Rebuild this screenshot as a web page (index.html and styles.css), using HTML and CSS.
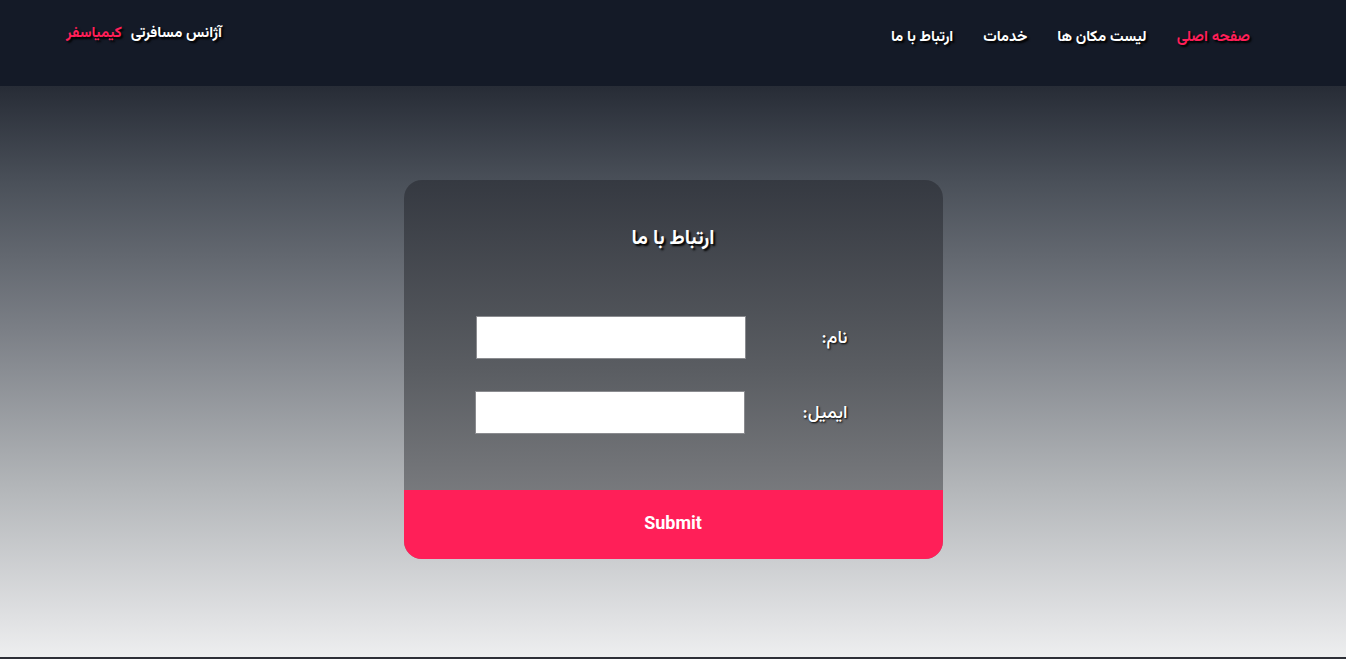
FILE: index.html
```html
<!DOCTYPE html>
<html lang="fa" dir="rtl">
<head>
<meta charset="utf-8">
<title>ارتباط با ما</title>
<link rel="stylesheet" href="styles.css">
</head>
<body>
<header class="topbar">
  <nav class="nav">
    <a class="nav-link active" href="#">صفحه اصلی</a>
    <a class="nav-link" href="#">لیست مکان ها</a>
    <a class="nav-link" href="#">خدمات</a>
    <a class="nav-link" href="#">ارتباط با ما</a>
  </nav>
  <div class="brand"><span class="brand-white">آژانس مسافرتی</span><span class="brand-pink">کیمیاسفر</span></div>
</header>
<main class="main">
  <form class="card">
    <div class="card-body">
      <h1 class="card-title">ارتباط با ما</h1>
      <div class="fields">
        <div class="row row-name">
          <label class="label">نام:</label>
          <input class="input" type="text">
        </div>
        <div class="row row-email">
          <label class="label">ایمیل:</label>
          <input class="input" type="text">
        </div>
      </div>
    </div>
    <button class="submit" type="button">Submit</button>
  </form>
</main>
</body>
</html>
```

FILE: styles.css
```css
* { box-sizing: border-box; }
html, body { margin: 0; padding: 0; height: 100%; }
body {
  font-family: "Vazirmatn", "Noto Sans", sans-serif;
  background: linear-gradient(180deg, #272c36 86px, #4b515a 28%, #7b7f86 50%, #b3b6b9 74%, #e0e1e3 94%, #eeeff0 100%);
  color: #fff;
  min-height: 659px;
  display: flex;
  flex-direction: column;
  border-bottom: 2px solid #2d2f37;
}
.topbar {
  height: 86px;
  background: #141a27;
  display: flex;
  justify-content: space-between;
  align-items: flex-start;
  padding: 0 96px 0 66px;
}
.nav {
  display: flex;
  gap: 30px;
  padding-top: 26px;
}
.nav-link {
  color: #fff;
  text-decoration: none;
  font-weight: bold;
  font-size: 15px;
  line-height: 24px;
  text-shadow: 2px 2px 2px #000;
}
.nav-link.active { color: #ff1f58; }
.brand {
  display: flex;
  gap: 9px;
  padding-top: 22px;
  font-weight: bold;
  font-size: 15px;
  line-height: 24px;
  text-shadow: 2px 2px 2px #000;
}
.brand-white { color: #fff; }
.brand-pink { color: #ff1f58; }
.main {
  flex: 1;
  display: flex;
  justify-content: center;
  padding-top: 94px;
}
.card {
  width: 539px;
  height: 379px;
  border-radius: 18px;
  overflow: hidden;
  display: flex;
  flex-direction: column;
  background: linear-gradient(180deg, #353941 0%, #5a5d62 50%, #88898c 100%);
}
.card-body {
  flex: 1;
  display: flex;
  flex-direction: column;
  align-items: center;
}
.card-title {
  margin: 44px 0 0;
  font-size: 20px;
  line-height: 30px;
  font-weight: bold;
  text-shadow: 2px 2px 2px #000;
}
.fields {
  display: flex;
  flex-direction: column;
  gap: 32px;
  margin-top: 62px;
  width: 100%;
  padding: 0 95px 0 71px;
}
.row {
  display: flex;
  align-items: center;
  justify-content: space-between;
}
.label {
  font-size: 18px;
  font-weight: 500;
  padding-top: 2px;
  text-shadow: 1px 1px 2px #000;
}
.input {
  width: 270px;
  height: 43px;
  border: 1px solid #8a8b8f;
  background: #fff;
  margin: 0;
}
.row-name .input { margin-left: 1px; }
.submit {
  height: 69px;
  border: none;
  background: #ff1f58;
  color: #fff;
  font-family: Roboto, sans-serif;
  font-weight: bold;
  font-size: 18px;
  padding-bottom: 6px;
  cursor: pointer;
}
```
